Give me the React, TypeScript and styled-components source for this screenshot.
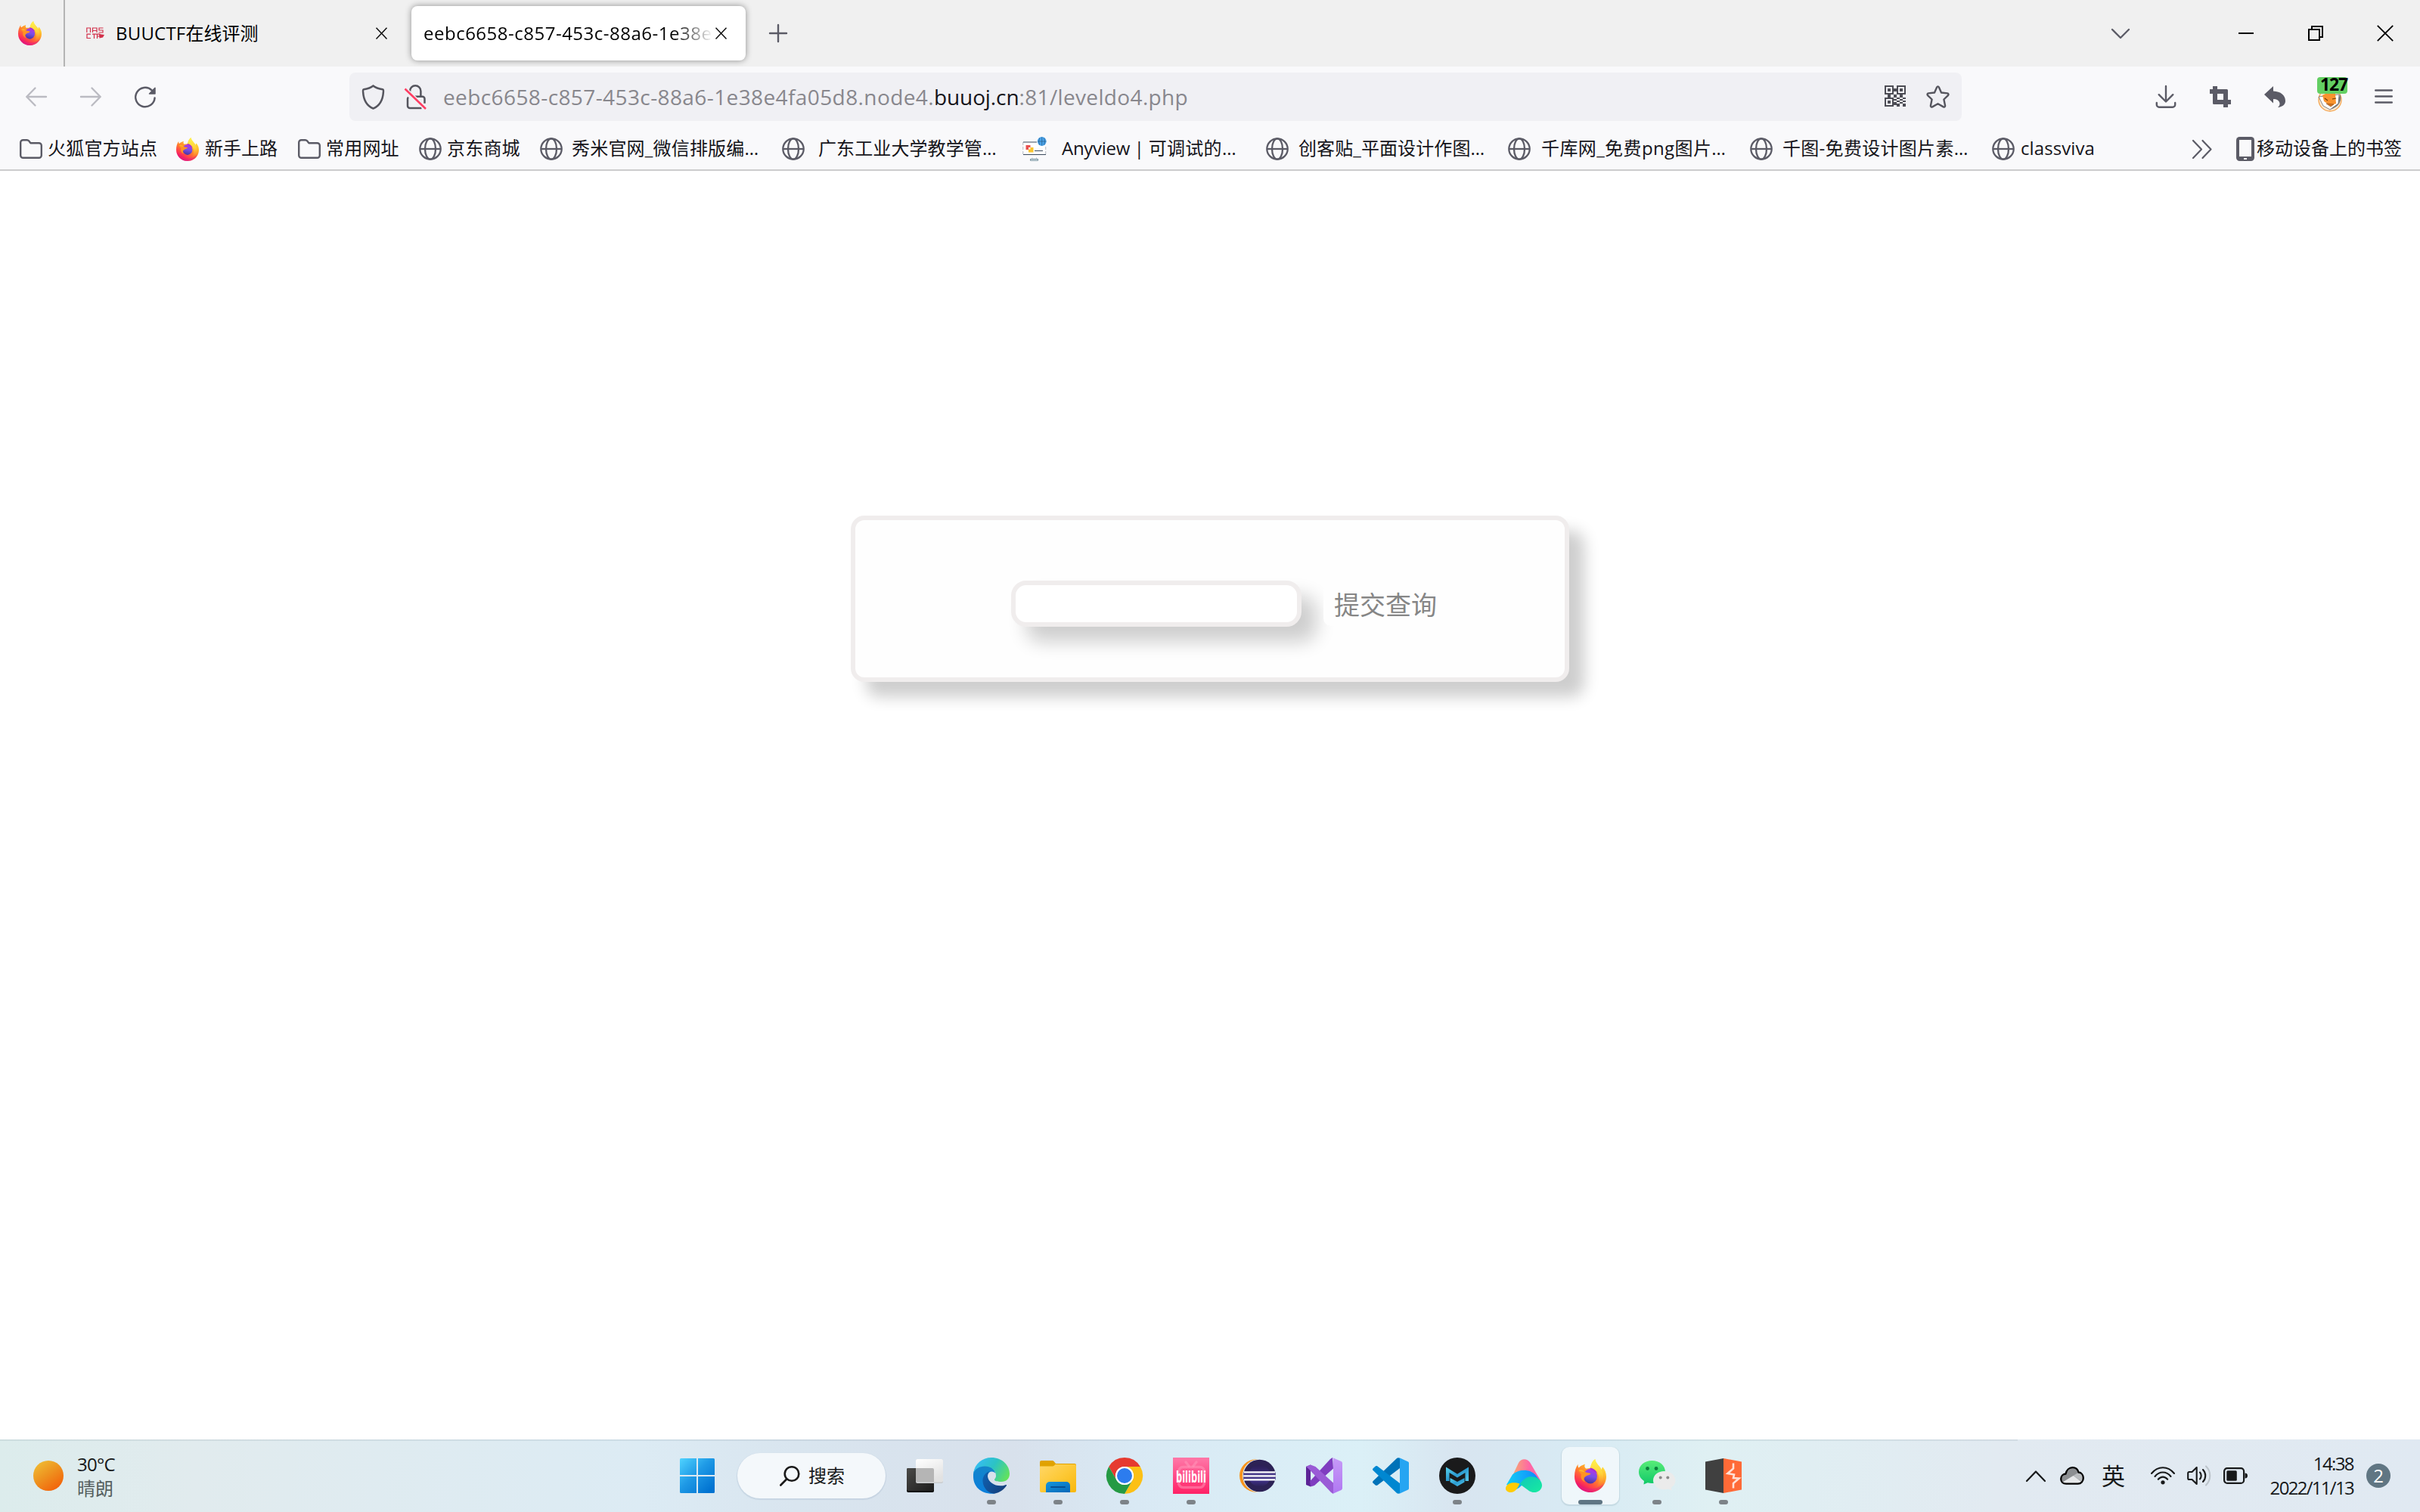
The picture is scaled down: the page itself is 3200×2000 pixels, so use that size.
import React from "react";
import styled, { createGlobalStyle } from "styled-components";

const Global = createGlobalStyle`
  * { box-sizing: border-box; }
  html, body { margin: 0; padding: 0; }
  body { font-family: "Open Sans", "Noto Sans CJK SC", sans-serif; font-size: 24px; color: #15141a; background: #fff; overflow: hidden; }
  svg { display: block; flex: none; overflow: visible; }
`;

const Screen = styled.div`
  display: flex;
  flex-direction: column;
  width: 3200px;
  height: 2000px;
  overflow: hidden;
  background: #fff;
`;

const Text = styled.span<{ $track?: number }>`
  white-space: nowrap;
  letter-spacing: ${(p) => p.$track ?? 0}px;
`;

/* ---------- tab strip ---------- */

const TabStrip = styled.header`
  display: flex;
  align-items: center;
  height: 88px;
  flex: none;
  background: #f0f0f0;
  color: #000;
`;

const PinnedTab = styled.div`
  display: flex;
  align-items: center;
  width: 86px;
  height: 100%;
  padding-left: 24px;
  border-right: 2px solid #b4b4b4;
`;

const Tab = styled.div<{ $active?: boolean }>`
  display: flex;
  align-items: center;
  height: 72px;
  width: ${(p) => (p.$active ? 442 : 458)}px;
  padding: ${(p) => (p.$active ? "0 25px 0 16px" : "0 32px 0 28px")};
  border-radius: 8px;
  background: ${(p) => (p.$active ? "#fff" : "transparent")};
  box-shadow: ${(p) => (p.$active ? "0 0 8px rgba(0, 0, 0, 0.42)" : "none")};
  line-height: 36px;
`;

const TabTitle = styled.div<{ $faded?: boolean }>`
  flex: 1;
  white-space: nowrap;
  margin-right: 3px;
  ${(p) => p.$faded && "mask-image: linear-gradient(to left, transparent, #000 52px);"}
`;

const Favicon = styled.div`
  width: 39px;
`;

const NewTab = styled.div`
  margin-left: 31px;
`;

const WindowControls = styled.div`
  display: flex;
  align-items: center;
  margin-left: auto;
  padding-right: 35px;
`;

const ControlSlot = styled.div<{ $gap: number }>`
  margin-left: ${(p) => p.$gap}px;
`;

/* ---------- navigation toolbar ---------- */

const NavBar = styled.nav`
  display: flex;
  align-items: center;
  height: 80px;
  flex: none;
  background: #f9f9fb;
  padding: 0 36px 0 34px;
`;

const NavButtons = styled.div`
  display: flex;
  align-items: center;
  gap: 44px;
  width: 428px;
`;

const UrlBar = styled.div`
  display: flex;
  align-items: center;
  width: 2132px;
  height: 64px;
  border-radius: 8px;
  background: #f0f0f4;
  padding: 0 16px 0 17px;
`;

const UrlText = styled.div`
  display: flex;
  flex: 1;
  margin-left: 22px;
  font-size: 28px;
  line-height: 40px;
  color: #88878d;
`;

const Host = styled(Text)`
  color: #15141a;
`;

const UrlIcons = styled.div`
  display: flex;
  gap: 27px;
`;

const LockSlot = styled.div`
  margin-left: 27px;
`;

const ToolbarIcons = styled.div`
  display: flex;
  align-items: center;
  gap: 44px;
  margin-left: 257px;
`;

const Extension = styled.div`
  position: relative;
  width: 40px;
  height: 44px;
  margin: 0 -8px 0 -2px;
  padding: 10px 0 0 1px;
`;

const ExtensionBadge = styled.span`
  position: absolute;
  top: -4px;
  left: 0;
  width: 40px;
  height: 22px;
  padding-left: 4px;
  border-radius: 4px;
  background: #63cf63;
  color: #000;
  font: 700 23px/19px "Open Sans", sans-serif;
  letter-spacing: -1.2px;
`;

/* ---------- bookmarks ---------- */

const BookmarkBar = styled.div`
  display: flex;
  align-items: center;
  height: 58px;
  flex: none;
  padding: 2px 24px 0 26px;
  border-bottom: 2px solid #cccccd;
  background: #f9f9fb;
`;

const Bookmark = styled.div<{ $width: number; $gap: number }>`
  display: flex;
  align-items: center;
  width: ${(p) => p.$width}px;
  gap: ${(p) => p.$gap}px;
  line-height: 36px;
`;

const BookmarkLabel = styled(Text)`
  padding-bottom: 2px;
`;

const BookmarkOverflow = styled.div`
  margin: 0 32px 0 auto;
`;

const MobileBookmarks = styled.div`
  display: flex;
  align-items: center;
  gap: 3px;
  line-height: 36px;
`;

/* ---------- page ---------- */

const Page = styled.main`
  display: flex;
  justify-content: center;
  align-items: flex-start;
  flex: 1;
  padding-top: 456px;
`;

const Card = styled.form`
  display: flex;
  align-items: flex-start;
  width: 950px;
  height: 220px;
  padding: 80px 0 0 206px;
  border: 6px solid #f0eded;
  border-radius: 18px;
  background: #fefefe;
  box-shadow: 20px 20px 20px #cecece;
`;

const QueryInput = styled.input`
  width: 384px;
  height: 61px;
  border: 6px solid #f0eded;
  border-radius: 20px;
  background: #fff;
  box-shadow: 20px 20px 24px #cecece;
  outline: none;
`;

const SubmitButton = styled.button`
  margin: 4px 0 0 29px;
  padding: 0 12px 0 14px;
  height: 56px;
  border: 0;
  border-radius: 10px;
  background: #fefefe;
  color: #868686;
  font: 34px/56px "Open Sans", "Noto Sans CJK SC", sans-serif;
`;

/* ---------- taskbar ---------- */

const Taskbar = styled.footer`
  display: flex;
  align-items: center;
  height: 96px;
  flex: none;
  color: #17191a;
  background:
    linear-gradient(rgba(70, 95, 110, 0.1), rgba(70, 95, 110, 0.1)) 0 0 / 2668px 2px no-repeat,
    linear-gradient(90deg, #dcecec 0, #e1ebee 260px, #dcebf4 850px, #d9e5ef 1050px, #d8e1ec 1340px, #d9e9f4 1500px, #dbf0f7 1800px, #d8e5f0 1930px, #d8ebf4 2100px, #dff0f3 2260px, #e2eaf1 2640px, #e0e9f2 3200px);
`;

const Weather = styled.div`
  display: flex;
  align-items: center;
  gap: 18px;
  width: 878px;
  padding: 2px 0 0 44px;
`;

const Sun = styled.div`
  width: 40px;
  height: 40px;
  margin-bottom: 2px;
  border-radius: 50%;
  background: linear-gradient(145deg, #f0c035 5%, #ee9420 45%, #f2660c 85%);
`;

const TwoLines = styled.div<{ $end?: boolean }>`
  display: flex;
  flex-direction: column;
  align-items: ${(p) => (p.$end ? "flex-end" : "flex-start")};
  line-height: 32px;
`;

const Muted = styled.span`
  color: #55605f;
`;

const Apps = styled.div`
  display: flex;
  align-items: center;
  height: 96px;
`;

const AppSlot = styled.div<{ $active?: boolean }>`
  display: flex;
  flex-direction: column;
  align-items: center;
  width: 76px;
  height: 76px;
  margin: 0 6px;
  padding-top: 14px;
  border-radius: 10px;
  background: ${(p) => (p.$active ? "rgba(255, 255, 255, 0.6)" : "transparent")};
  box-shadow: ${(p) => (p.$active ? "0 1px 1px 1px rgba(80, 110, 130, 0.14)" : "none")};
`;

const IconBox = styled.div`
  display: flex;
  align-items: center;
  justify-content: center;
  width: 48px;
  height: 48px;
`;

const Running = styled.i<{ $active?: boolean }>`
  width: ${(p) => (p.$active ? 32 : 12)}px;
  height: 6px;
  margin-top: 8px;
  border-radius: 3px;
  background: ${(p) => (p.$active ? "#5f7684" : "#7d8388")};
`;

const SearchPill = styled.div`
  display: flex;
  align-items: center;
  gap: 11px;
  width: 196px;
  height: 60px;
  margin: 0 8px 0 9px;
  padding-left: 56px;
  border-radius: 30px;
  background: #f4f8fb;
  box-shadow: 0 1px 1px 1px rgba(80, 110, 150, 0.13);
  line-height: 36px;
`;

const Tray = styled.div`
  display: flex;
  align-items: center;
  margin-left: auto;
  padding: 0 39px 0 0;
`;

const TraySlot = styled.div<{ $gap: number }>`
  margin-left: ${(p) => p.$gap}px;
`;

const InputMode = styled.span`
  margin-left: 23px;
  width: 32px;
  font-size: 31px;
  line-height: 44px;
`;

const Clock = styled(TwoLines)`
  width: 140px;
  padding-bottom: 1px;
`;

const NoticeCount = styled.div`
  width: 32px;
  height: 32px;
  margin-left: 17px;
  border-radius: 50%;
  background: #607683;
  color: #fff;
  font-size: 24px;
  line-height: 31px;
  text-align: center;
`;

/* ---------- icons ---------- */

const INK = "#5b5b66";

const Firefox = ({ w, h, id }: { w: number; h: number; id: string }) => (
  <svg width={w} height={h} viewBox="0 0 126 130" preserveAspectRatio="none">
    <defs>
      <linearGradient id={id + "b"} x1="0.85" y1="0.1" x2="0.3" y2="1">
        <stop offset="0" stopColor="#fff14a" />
        <stop offset="0.3" stopColor="#ffb62a" />
        <stop offset="0.55" stopColor="#ff7a2e" />
        <stop offset="0.78" stopColor="#ff3a4f" />
        <stop offset="1" stopColor="#e2007d" />
      </linearGradient>
      <linearGradient id={id + "y"} x1="0.5" y1="0" x2="0.5" y2="1">
        <stop offset="0" stopColor="#fff34f" />
        <stop offset="0.5" stopColor="#ffd33a" />
        <stop offset="1" stopColor="#ff8a30" stopOpacity="0" />
      </linearGradient>
      <linearGradient id={id + "p"} x1="0.6" y1="0" x2="0.4" y2="1">
        <stop offset="0" stopColor="#b833e1" />
        <stop offset="0.5" stopColor="#7a4ee8" />
        <stop offset="1" stopColor="#46349b" />
      </linearGradient>
    </defs>
    <path fill={`url(#${id}b)`} d="M14 20C13 27 14 31 17 34C22 28 30 24 42 20C38 27 40 33 45 37C52 36 58 37 64 33C65 21 72 6 82 0C83 14 96 24 103 34L107 43C109 36 108 34 112 31C121 41 126 54 126 68C126 103 98 130 63 130C28 130 0 103 0 68C0 48 5 32 14 20Z" />
    <path fill={`url(#${id}y)`} d="M82 0C83 14 96 24 105 38C124 68 114 102 84 112C100 98 101 66 88 48C80 38 66 40 64 33C65 21 72 6 82 0Z" />
    <ellipse cx="63" cy="67" rx="27" ry="29" fill={`url(#${id}p)`} />
    <path fill="#e3267d" opacity=".5" d="M10 92C28 118 92 128 118 92C108 118 86 130 63 130C38 130 18 114 10 92Z" />
    <path fill="#ff9423" d="M16 46C24 36 36 40 42 50C50 55 58 52 64 57C62 63 50 63 45 67C36 72 34 82 44 90C30 88 22 72 27 60Z" />
    <path fill="#ffbd2e" d="M16 44C26 38 36 42 41 51C34 50 24 48 16 44Z" opacity=".8" />
    <path fill="#a52bd6" d="M62 35C72 34 82 42 90 54L80 50C76 44 68 42 62 40Z" />
  </svg>
);

const Close = () => (
  <svg width="15" height="16" viewBox="0 0 15 16" stroke="#111" strokeWidth="1.5">
    <path d="M.5.7l14 14.8M14.5.7L.5 15.5" />
  </svg>
);

const Folder = () => (
  <svg width="30" height="26" viewBox="0 0 30 26" fill="none" stroke={INK} strokeWidth="2.4" strokeLinejoin="round">
    <path d="M1.2 21.5V4.5a3.3 3.3 0 0 1 3.3-3.3h5.2c1 0 1.8.4 2.4 1.100l2.300 2.900h11.100a3.300 3.300 0 0 1 3.300 3.300v13a3.300 3.300 0 0 1-3.300 3.300h-21a3.300 3.300 0 0 1-3.300-3.300z" />
  </svg>
);

const Globe = () => (
  <svg width="30" height="30" viewBox="0 0 30 30" fill="none" stroke={INK} strokeWidth="2.3">
    <circle cx="15" cy="15" r="13.700" />
    <ellipse cx="15" cy="15" rx="7" ry="13.700" />
    <path d="M1.500 15h27" />
  </svg>
);

const Anyview = () => (
  <svg width="32" height="32" viewBox="0 0 32 32">
    <path fill="#fff" d="M1.500 7h28v16h-28z" />
    <path d="M.7 7v17M30.700 13v11" stroke="#c2c6cd" strokeWidth="1.200" strokeDasharray="4 2" />
    <path d="M1 7h18M1 23.500h30M16 18.500h11" stroke="#3b4a5c" strokeWidth="1.200" />
    <path fill="#e8504f" d="M4.500 11h6v6h-6z" />
    <path fill="#fbc52d" d="M8 14h6.500v6.500H8z" />
    <path fill="#fff" d="M8 14h2.500v2.500H8z" />
    <path d="M13 27v2M18.500 27v2" stroke="#d0d3d8" />
    <path fill="#fff" stroke="#6b8a98" d="M10.500 29.500h10v1.800h-10z" />
    <circle cx="25.700" cy="6" r="5.900" fill="#4aa3ea" />
    <path d="M25.700.3v11.400M20 6h11.400M22.800 1.500c-1.200 3-1.200 6 0 9M28.600 1.500c1.200 3 1.200 6 0 9" stroke="#2b5f88" strokeWidth=".7" fill="none" />
  </svg>
);

const Arrow = ({ flip }: { flip?: boolean }) => (
  <svg width="28" height="26" viewBox="0 0 28 26" fill="none" stroke="#bbbbc2" strokeWidth="2.400" strokeLinecap="round" strokeLinejoin="round">
    <path transform={flip ? "translate(28 0) scale(-1 1)" : undefined} d="M27 13H1.300M12.500 1.500L1.300 13l11.200 11.500" />
  </svg>
);

const Reload = () => (
  <svg width="28" height="29" viewBox="0 0 28 29" fill="none" stroke={INK} strokeWidth="2.500" strokeLinecap="round">
    <path d="M26.600 15.500A12.700 12.700 0 1 1 22.700 5.400" />
    <path d="M27 2.200v7.800h-7.500z" fill={INK} stroke={INK} strokeWidth="1.500" strokeLinejoin="round" />
  </svg>
);

const Shield = () => (
  <svg width="29" height="33" viewBox="0 0 29 33" fill="none" stroke="#55555e" strokeWidth="2.500" strokeLinejoin="round">
    <path d="M14.500 1.400C11 4.200 6 5.600 2 6.200c-1 .2-1.200 1.100-.9 3.600C1.700 19 5 27.500 14.500 31.500 24 27.500 27.300 19 27.900 9.800c.3-2.500.1-3.400-.9-3.600-4-.6-9-2-12.500-4.800z" />
  </svg>
);

const BrokenLock = () => (
  <svg width="29" height="33" viewBox="0 0 29 33" fill="none" stroke="#55555e" strokeWidth="2.500">
    <path d="M7 13V8.500a7.200 7.200 0 0 1 14.400 0V15" />
    <path d="M10.500 15.800H23.500a3 3 0 0 1 3 3v6M22.500 31H7a3 3 0 0 1-3-3V18.800a3 3 0 0 1 1-2.200" />
    <path d="M.5 5.500l27.500 26.500" stroke="#f0f0f4" strokeWidth="5.500" />
    <path d="M.5 5.500l27.500 26.500" stroke="#ff3d63" strokeWidth="2.600" />
  </svg>
);

const QR = [
  "11111100111111",
  "10000100100001",
  "10110111101101",
  "10110111101101",
  "10000100100001",
  "11111100111111",
  "00110011001100",
  "00110011001100",
  "11111100110011",
  "10000111001100",
  "10110100110011",
  "10110111001100",
  "10000111110011",
  "11111100110011",
];

const QrCode = () => (
  <svg width="28" height="28" viewBox="0 0 14 14" fill="#4d4d55" shapeRendering="crispEdges">
    {QR.flatMap((row, y) => [...row].map((c, x) => (c === "1" ? <rect key={`${x}-${y}`} x={x} y={y} width="1" height="1" /> : null)))}
  </svg>
);

const Star = () => (
  <svg width="31" height="30" viewBox="0 0 31 30" fill="none" stroke="#55555e" strokeWidth="2.400" strokeLinejoin="round">
    <path d="M14.200 2.300c.5-1.200 2.100-1.200 2.600 0l3.200 7.200 8 .9c1.400.2 2 1.700 1 2.700l-5.600 5.400 1.700 8.300c.2 1.300-1.100 2.300-2.300 1.600L15.500 24.300l-7.300 4.100c-1.200.7-2.500-.3-2.300-1.600l1.700-8.300L2 13.100c-1-1-.4-2.500 1-2.700l8-.9z" />
  </svg>
);

const Download = () => (
  <svg width="27" height="30" viewBox="0 0 27 30" fill="none" stroke={INK} strokeWidth="2.400" strokeLinecap="round" strokeLinejoin="round">
    <path d="M13 1v19.500M3.700 12.200l9.300 9.300 9.300-9.300M.8 23v2.500a3.200 3.200 0 0 0 3.200 3.200h18a3.200 3.200 0 0 0 3.200-3.200V23" />
  </svg>
);

const Crop = () => (
  <svg width="28" height="28" viewBox="0 0 28 28" fill={INK}>
    <path fillRule="evenodd" d="M4 0h6v4h12.500a1.500 1.500 0 0 1 1.500 1.500V18h4v6h-4v4h-6v-4H5.500A1.500 1.500 0 0 1 4 22.500V10H0V4h4zM10 10v8h8v-8z" />
  </svg>
);

const Undo = () => (
  <svg width="28" height="28" viewBox="0 0 28 28" fill={INK}>
    <path d="M0 11L12 0v6.500C22 7 28 12 28 19.500c0 4-2.500 7-8.500 8.500H18c4.500-3 3.500-11-6-11v5.500z" />
  </svg>
);

const Fox = () => (
  <svg width="32" height="32" viewBox="0 0 32 32">
    <circle cx="16" cy="16" r="15" fill="#fbe7d0" stroke="#f5a34c" strokeWidth="1.300" />
    <path d="M29 8c4 8-1 18-13 21 6-6 12-12 13-21z" fill="#77797d" />
    <path d="M1 12l6 12 9 5 11-8 1-12z" fill="#fff" stroke="#666" strokeWidth=".8" />
    <path d="M6 10l4-2h13l1 13-6 2-4-1-6-4z" fill="#f8932e" />
    <path d="M11 21l10 1-4 3z" fill="#d9741c" stroke="#8d4b12" strokeWidth=".6" />
    <path d="M9 14l4 3M19 15l5-1" stroke="#6b3a10" strokeWidth="1.100" />
  </svg>
);

const Menu = () => (
  <svg width="24" height="20" viewBox="0 0 24 20" stroke={INK} strokeWidth="2.400" strokeLinecap="round">
    <path d="M1.200 1.500h21.600M1.200 9.500h21.600M1.200 17.500h21.600" />
  </svg>
);

const Plus = () => (
  <svg width="24" height="24" viewBox="0 0 24 24" stroke={INK} strokeWidth="2.400" strokeLinecap="round">
    <path d="M12 1v22M1 12h22" />
  </svg>
);

const ChevronDown = () => (
  <svg width="24" height="13" viewBox="0 0 24 13" fill="none" stroke={INK} strokeWidth="2.300" strokeLinecap="round" strokeLinejoin="round">
    <path d="M1 1l11 11L23 1" />
  </svg>
);

const Minimize = () => (
  <svg width="20" height="2" viewBox="0 0 20 2">
    <path fill="#000" d="M0 0h20v2H0z" />
  </svg>
);

const Restore = () => (
  <svg width="20" height="20" viewBox="0 0 20 20" fill="none" stroke="#000" strokeWidth="2">
    <path d="M1 5h14v14H1zM5 4.500V1h14v14h-3.500" />
  </svg>
);

const WinClose = () => (
  <svg width="22" height="22" viewBox="0 0 22 22" stroke="#000" strokeWidth="1.800">
    <path d="M.8.8l20.400 20.400M21.200.8L.8 21.200" />
  </svg>
);

const DasLogo = () => (
  <svg width="24" height="16" viewBox="0 0 24 16" fill="none" stroke="#d2304a" strokeWidth="1.200">
    <path d="M.8 7V1h4.700v6M8.500 7V1H14v6M8.500 4.500H14M22.500 1H17v3h5v3h-5.500" />
    <path d="M6 9.200H1v5.300h5M8 9.200h7M10.500 9.200v5.800M14.500 15V9.200h4M14.500 12h4" />
    <path fill="#d2304a" stroke="none" d="M17 9l7 1-2 3.500-4.500 1z" />
  </svg>
);

const DoubleChevron = () => (
  <svg width="26" height="25" viewBox="0 0 26 25" fill="none" stroke={INK} strokeWidth="2.200" strokeLinecap="round" strokeLinejoin="round">
    <path d="M1 1l11 11.500L1 24M13.500 1l11 11.500-11 11.500" />
  </svg>
);

const Phone = () => (
  <svg width="24" height="32" viewBox="0 0 24 32">
    <rect width="24" height="32" rx="4.500" fill={INK} />
    <path fill="#f9f9fb" d="M4 4h16v22H4zM10 28h4v2h-4z" />
  </svg>
);

const Windows = () => (
  <svg width="46" height="46" viewBox="0 0 46 46">
    <defs>
      <linearGradient id="win" gradientUnits="userSpaceOnUse" x1="0" y1="0" x2="40" y2="42">
        <stop offset="0" stopColor="#4fd3ff" />
        <stop offset="0.5" stopColor="#1f9ae6" />
        <stop offset="1" stopColor="#0173d1" />
      </linearGradient>
    </defs>
    <path fill="url(#win)" d="M1.500 0H22v22H0V1.500A1.500 1.500 0 0 1 1.500 0zM24 0h20.500A1.500 1.500 0 0 1 46 1.500V22H24zM0 24h22v22H1.500A1.500 1.500 0 0 1 0 44.500zM24 24h22v20.500a1.500 1.500 0 0 1-1.500 1.500H24z" />
  </svg>
);

const Magnifier = () => (
  <svg width="27" height="27" viewBox="0 0 27 27" fill="none" stroke="#1a1a1a" strokeWidth="2.600" strokeLinecap="round">
    <circle cx="16" cy="10.500" r="9.300" />
    <path d="M9.200 17.500L1.300 25.500" />
  </svg>
);

const TaskView = () => (
  <svg width="48" height="48" viewBox="0 0 48 48">
    <defs>
      <linearGradient id="tvd" x1="0" y1="0" x2="1" y2="1">
        <stop offset="0" stopColor="#4b4a48" />
        <stop offset="1" stopColor="#1d1d1c" />
      </linearGradient>
      <linearGradient id="tvl" x1="0" y1="0" x2="0.500" y2="1">
        <stop offset="0" stopColor="#fff" />
        <stop offset="1" stopColor="#e2e2e2" />
      </linearGradient>
    </defs>
    <rect y="14" width="36" height="32" rx="2" fill="#070707" />
    <rect y="14" width="36" height="30" rx="2" fill="url(#tvd)" />
    <rect x="12" y="2" width="36" height="32" rx="2" fill="#c9ccce" />
    <rect x="12" y="2" width="36" height="30.500" rx="2" fill="url(#tvl)" />
    <path fill="#b5b5b5" d="M12 14h22a2 2 0 0 1 2 2v16.500H14a2 2 0 0 1-2-2z" />
  </svg>
);

const Edge = () => (
  <svg width="48" height="48" viewBox="0 0 48 48">
    <defs>
      <linearGradient id="eg" x1="0" y1="0.300" x2="1" y2="0.700">
        <stop offset="0" stopColor="#37bdf5" />
        <stop offset="0.500" stopColor="#2cc3c4" />
        <stop offset="1" stopColor="#63e35a" />
      </linearGradient>
      <linearGradient id="eb" x1="0.500" y1="0" x2="0.300" y2="1">
        <stop offset="0" stopColor="#1586c9" />
        <stop offset="1" stopColor="#0a7edc" />
      </linearGradient>
      <linearGradient id="ed" x1="0" y1="0" x2="1" y2="0.500">
        <stop offset="0" stopColor="#0f63b4" />
        <stop offset="1" stopColor="#15417f" />
      </linearGradient>
    </defs>
    <path fill="url(#eb)" d="M0 23C0 13 8 9 16 10.500c8 1 13 6 13 10-3-3-8-3-10 2-3 8 2 20 9 25.200C10 49 0 38 0 25z" />
    <path fill="url(#ed)" d="M22 18c-7 2-10 8-9.500 14C13.500 41 20 47.500 28 47.700 35 46.500 41 42 44 37c.4-1-.5-1.300-1.500-.8C32 40 20 34 19 25c0-3 1-5.500 3-7z" />
    <path fill="url(#eg)" d="M.3 20C2 8 12 0 24 0c14 0 24 10 24 21.500C48 28 43.500 32 37 32c-5 0-9-1-9-2.800 0-1.200 2-1.700 2-5.200C30 17 24 11.500 15 11.500 8 11.500 3 15 .3 20z" />
  </svg>
);

const Explorer = () => (
  <svg width="48" height="48" viewBox="0 0 48 48">
    <defs>
      <linearGradient id="exy" x1="0" y1="0" x2="1" y2="1">
        <stop offset="0" stopColor="#ffd768" />
        <stop offset="0.500" stopColor="#fdc937" />
        <stop offset="1" stopColor="#f8b70b" />
      </linearGradient>
      <linearGradient id="exb" x1="0" y1="0" x2="1" y2="1">
        <stop offset="0" stopColor="#1496dd" />
        <stop offset="1" stopColor="#0667b8" />
      </linearGradient>
    </defs>
    <path fill="#e0a200" d="M0 6a2 2 0 0 1 2-2h14c1.500 0 2.500.7 3.200 1.700L21 8h25a2 2 0 0 1 2 2v8H0z" />
    <path fill="url(#exy)" d="M0 11.500h16c1.500 0 2.500-.5 3.500-1.500l1-1H46a2 2 0 0 1 2 2v33a2 2 0 0 1-2 2H2a2 2 0 0 1-2-2z" />
    <path fill="url(#exb)" d="M8 46V37a5 5 0 0 1 5-5h22a5 5 0 0 1 5 5v9z" />
    <path stroke="#064f93" strokeWidth="2" strokeLinecap="round" d="M15 39h18" />
  </svg>
);

const Chrome = () => (
  <svg width="48" height="48" viewBox="0 0 48 48">
    <path fill="#e63a30" d="M24 12h20.800A24 24 0 0 0 3.200 12L13.600 30A12 12 0 0 1 24 12z" />
    <path fill="#fcc015" d="M44.800 12A24 24 0 0 1 24 48l10.400-18A12 12 0 0 0 24 12z" />
    <path fill="#259a44" d="M3.200 12A24 24 0 0 0 24 48l10.400-18a12 12 0 0 1-20.800 0z" />
    <circle cx="24" cy="24" r="12" fill="#fff" />
    <circle cx="24" cy="24" r="10" fill="#2c7cee" />
  </svg>
);

const BiliWord = styled.text`
  font: 700 22px "Open Sans", sans-serif;
  fill: #fff;
`;

const Bilibili = () => (
  <svg width="48" height="48" viewBox="0 0 48 48">
    <defs>
      <linearGradient id="bl" x1="0" y1="0" x2="0" y2="1">
        <stop offset="0" stopColor="#ff78a8" />
        <stop offset="1" stopColor="#ff2166" />
      </linearGradient>
    </defs>
    <path fill="url(#bl)" d="M0 0h48v48H0z" />
    <g fill="none" stroke="#ff9abb" strokeOpacity=".5" strokeWidth="3.500" strokeLinecap="round">
      <rect x="7.500" y="12.500" width="34" height="27" rx="6" />
      <path d="M17 6l4 5M31 6l-4 5" />
    </g>
    <BiliWord x="4" y="33" textLength="40" lengthAdjust="spacingAndGlyphs">bilibili</BiliWord>
  </svg>
);

const Eclipse = () => (
  <svg width="48" height="44" viewBox="0 0 48 44">
    <defs>
      <linearGradient id="ec" x1="0" y1="0" x2="0" y2="1">
        <stop offset="0" stopColor="#2b1f55" />
        <stop offset="0.700" stopColor="#40318a" />
        <stop offset="1" stopColor="#2c2255" />
      </linearGradient>
    </defs>
    <circle cx="21.700" cy="22" r="21.700" fill="#f7941e" />
    <circle cx="26" cy="22" r="22" fill="#dceaf4" />
    <circle cx="26.500" cy="22" r="21.300" fill="#2c2255" />
    <circle cx="26.500" cy="22" r="14.500" fill="url(#ec)" />
    <path fill="#4a3d8c" d="M5.500 18.500h42v9h-42z" />
    <path fill="#fff" d="M6 16.300h41v2.300H6zM5.300 21.300h42.500v2.300H5.300zM6 26.300h41v2.300H6z" />
  </svg>
);

const VisualStudio = () => (
  <svg width="48" height="48" viewBox="0 0 48 48">
    <defs>
      <linearGradient id="vsp" x1="0" y1="0" x2="0" y2="1">
        <stop offset="0" stopColor="#c79bf7" />
        <stop offset="1" stopColor="#b077f2" />
      </linearGradient>
    </defs>
    <path fill="#5c2396" d="M0 12l6-2.500V38.500L0 36z" />
    <path fill="#7f3dc0" d="M35 0l1 14.500L11 37l-5 1.500-1-7L32 2z" />
    <path fill="#9a5bd6" d="M0 12l6-2.500L12.500 12 36 33.500V48l-3-2L4 15.500z" />
    <path fill="url(#vsp)" d="M35 0l12 5.300L48 7v34l-1 1.700L35 48c1-1 1-2 1-3V3c0-1 0-2-1-3z" />
  </svg>
);

const VSCode = () => (
  <svg width="48" height="48" viewBox="0 0 48 48">
    <path fill="#0072b8" d="M32 1c1-1 3-1 4 0v13L6.500 36.500c-1 .7-2 .6-2.800 0L.7 33.800c-.9-.8-.9-2 0-2.800z" />
    <path fill="#0087d1" d="M32 47c1 1 3 1 4 0V34L6.500 11.500c-1-.7-2-.6-2.800 0L.7 14.200c-.9.8-.9 2 0 2.800z" />
    <path fill="#26a5f2" d="M35 0l12 5.500c.7.400 1 1 1 1.700v33.600c0 .7-.3 1.300-1 1.700L35 48c.7-.7 1-1.500 1-2.500v-43c0-1-.3-1.800-1-2.500z" />
  </svg>
);

const MIcon = () => (
  <svg width="48" height="48" viewBox="0 0 48 48">
    <defs>
      <linearGradient id="mc" x1="0" y1="0" x2="1" y2="1">
        <stop offset="0" stopColor="#5ad4ee" />
        <stop offset="0.500" stopColor="#2b9bd0" />
        <stop offset="1" stopColor="#58c8ea" />
      </linearGradient>
    </defs>
    <circle cx="24" cy="24" r="24" fill="#1a1a1b" />
    <path fill="url(#mc)" d="M9 12.500l15 9.300 15-9.300V31h-4.500V20L24 26.500 13.500 20v11H9z" />
    <path fill="url(#mc)" d="M14.500 27L24 32l9.500-5v5.500L24 38l-9.500-5.500z" />
  </svg>
);

const AIcon = () => (
  <svg width="48" height="44" viewBox="0 0 48 44">
    <defs>
      <linearGradient id="ap" x1="0" y1="0" x2="1" y2="0">
        <stop offset="0.100" stopColor="#f7a07a" />
        <stop offset="0.600" stopColor="#ff67a5" />
      </linearGradient>
      <linearGradient id="ab" x1="0" y1="0.500" x2="1" y2="0.500">
        <stop offset="0" stopColor="#10d0f5" />
        <stop offset="1" stopColor="#1380ff" />
      </linearGradient>
      <linearGradient id="ag" x1="0" y1="0" x2="1" y2="1">
        <stop offset="0" stopColor="#10c8b8" />
        <stop offset="1" stopColor="#17ec9f" />
      </linearGradient>
    </defs>
    <path fill="url(#ap)" d="M9 22l8-17c3-6.500 12-6.500 15.500 0L46 28 28 24z" />
    <path fill="url(#ab)" d="M1 34l8-13.500c8-7.500 23-8 30.500.5L47 31c-3-5-11-9-18-4-5 4-8 10-15 13z" />
    <path fill="url(#ag)" d="M18.500 33c4-5 8-9.500 14-9.800C42 22.500 48 29 48 34.500 48 43 37.500 47.500 29.500 41z" />
    <path fill="#ffcc05" d="M0 38c1.500-6 9-8.500 18.500-5.500C16 38 13 44 6.500 44 2.500 44-.5 41.500 0 38z" />
  </svg>
);

const WeChat = () => (
  <svg width="48" height="40" viewBox="0 0 48 40">
    <defs>
      <linearGradient id="wc" x1="0" y1="0" x2="0" y2="1">
        <stop offset="0" stopColor="#58ec78" />
        <stop offset="1" stopColor="#10c968" />
      </linearGradient>
    </defs>
    <path fill="url(#wc)" d="M17.500 0C27.500 0 35 6.500 35 15s-7.500 15-17.500 15c-2 0-4-.3-5.800-.8L6.500 31.500 7 27C2.500 24 0 20 0 15 0 6.500 7.500 0 17.500 0z" />
    <path fill="#ebebeb" d="M33.500 14C42 14 48.500 19.500 48.500 26.200c0 4-2 7-5.500 9.300l.7 4-4.500-2c-1.700.5-3.700.8-5.700.8C25.500 38.300 19 33 19 26.200S25.500 14 33.500 14z" />
    <circle cx="11.500" cy="10.500" r="2.400" fill="#0b7f3c" />
    <circle cx="23" cy="10.500" r="2.400" fill="#0b7f3c" />
    <circle cx="28.700" cy="22.500" r="2" fill="#8a8a8a" />
    <circle cx="38.300" cy="22.500" r="2" fill="#8a8a8a" />
  </svg>
);

const Burp = () => (
  <svg width="48" height="46" viewBox="0 0 48 46">
    <path fill="#404040" d="M0 4.500L24 0v46L0 41.500z" />
    <path fill="#ff6a37" d="M24 0l24 4.500v37L24 46z" />
    <path fill="none" stroke="#ffe1d6" strokeWidth="2.600" d="M37 6.500v7L29.500 20l8.500 1.500L37 26l7.500.5L37 33v6.500" />
  </svg>
);

const ChevronUp = () => (
  <svg width="26" height="15" viewBox="0 0 26 15" fill="none" stroke="#17191a" strokeWidth="2.200" strokeLinecap="round" strokeLinejoin="round">
    <path d="M1 14L13 1.500 25 14" />
  </svg>
);

const Cloud = () => (
  <svg width="32" height="24" viewBox="0 0 32 24">
    <path fill="#8c8f92" d="M8 22.700C4 22.700 1.200 20 1.200 16.200 1.200 12.500 4 9.800 7.500 9.500 8.500 4.500 12 1.200 16.500 1.200c4 0 7 2.600 8 6.300 3.700.3 6.300 3.500 6.300 7.500 0 4.500-3 7.700-7 7.700z" />
    <path fill="#b9bcbf" d="M17.500 12l7-4.500c3.700.3 6.300 3.500 6.300 7.500 0 2-.5 3.500-1.500 5z" />
    <path fill="#e6e8ea" d="M3.500 20.500L17.500 12l11.500 8.500c-1.500 1.500-3 2.200-5.200 2.200H8c-2 0-3.500-.8-4.500-2.200z" />
    <path fill="none" stroke="#000" strokeWidth="2.300" d="M8 22.700C4 22.700 1.200 20 1.200 16.200 1.200 12.500 4 9.800 7.500 9.500 8.500 4.500 12 1.200 16.500 1.200c4 0 7 2.600 8 6.300 3.700.3 6.300 3.500 6.300 7.500 0 4.500-3 7.700-7 7.700z" />
  </svg>
);

const Wifi = () => (
  <svg width="32" height="24" viewBox="0 0 32 24" fill="none" stroke="#17191a" strokeWidth="2.100" strokeLinecap="round">
    <path d="M1 9C9.500-1.300 22.500-1.300 31 9M5.500 13c6-7.300 15-7.300 21 0M9.800 16.800c3.700-4.300 8.700-4.300 12.400 0" />
    <circle cx="16" cy="20.800" r="2.600" fill="#17191a" stroke="none" />
  </svg>
);

const Speaker = () => (
  <svg width="32" height="28" viewBox="0 0 32 28" fill="none" stroke="#17191a" strokeWidth="2.100" strokeLinecap="round" strokeLinejoin="round">
    <path d="M1.200 10.500a1.500 1.500 0 0 1 1.500-1.500H6.500L12.700 3v22L6.500 19H2.700a1.500 1.500 0 0 1-1.500-1.500zM17 9.500c2.200 2.500 2.200 6.500 0 9M21 6c4.300 4.500 4.300 11.500 0 16" />
    <path stroke="#bcc4cb" d="M25 1.500c7 7 7 18 0 25" />
  </svg>
);

const Battery = () => (
  <svg width="32" height="22" viewBox="0 0 32 22">
    <rect x="1.100" y="1.100" width="26" height="19.800" rx="4" fill="none" stroke="#17191a" strokeWidth="2.200" />
    <rect x="4.300" y="4.300" width="13.500" height="13.400" rx="1.500" fill="#17191a" />
    <path fill="#17191a" d="M28.500 7.500c2 0 3.500 1 3.500 3.500s-1.500 3.500-3.500 3.500z" />
  </svg>
);

/* ---------- data ---------- */

const bookmarks: { label: React.ReactNode; icon: React.ReactNode; width: number; gap: number; track?: number }[] = [
  { label: "火狐官方站点", icon: <Folder />, width: 207, gap: 7, track: 0.2 },
  { label: "新手上路", icon: <Firefox w={30} h={31} id="fxb" />, width: 161, gap: 8 },
  { label: "常用网址", icon: <Folder />, width: 160, gap: 7, track: 0.2 },
  { label: "京东商城", icon: <Globe />, width: 160, gap: 7, track: 0.2 },
  { label: "秀米官网_微信排版编…", icon: <Globe />, width: 320, gap: 12, track: 0.2 },
  { label: "广东工业大学教学管…", icon: <Globe />, width: 318, gap: 18, track: 0.1 },
  { label: <><Text $track={-0.3}>Anyview | </Text>可调试的…</>, icon: <Anyview />, width: 322, gap: 20, track: 0.3 },
  { label: "创客贴_平面设计作图…", icon: <Globe />, width: 320, gap: 13, track: 0.1 },
  { label: "千库网_免费png图片…", icon: <Globe />, width: 320, gap: 14, track: 0.4 },
  { label: "千图-免费设计图片素…", icon: <Globe />, width: 320, gap: 13, track: 0.3 },
  { label: "classviva", icon: <Globe />, width: 140, gap: 8, track: 0.1 },
];

const apps: { icon: React.ReactNode; running?: boolean; active?: boolean }[] = [
  { icon: <TaskView /> },
  { icon: <Edge />, running: true },
  { icon: <Explorer />, running: true },
  { icon: <Chrome />, running: true },
  { icon: <Bilibili />, running: true },
  { icon: <Eclipse /> },
  { icon: <VisualStudio /> },
  { icon: <VSCode /> },
  { icon: <MIcon />, running: true },
  { icon: <AIcon /> },
  { icon: <Firefox w={42} h={44} id="fxt" />, running: true, active: true },
  { icon: <WeChat />, running: true },
  { icon: <Burp />, running: true },
];

export default function App() {
  return (
    <Screen>
      <Global />
      <TabStrip>
        <PinnedTab>
          <Firefox w={31} h={32} id="fxp" />
        </PinnedTab>
        <Tab>
          <Favicon>
            <DasLogo />
          </Favicon>
          <TabTitle>
            <Text $track={0.2}>BUUCTF</Text>在线评测
          </TabTitle>
          <Close />
        </Tab>
        <Tab $active>
          <TabTitle $faded>
            <Text $track={0.5}>eebc6658-c857-453c-88a6-1e38e</Text>
          </TabTitle>
          <Close />
        </Tab>
        <NewTab>
          <Plus />
        </NewTab>
        <WindowControls>
          <ChevronDown />
          <ControlSlot $gap={144}><Minimize /></ControlSlot>
          <ControlSlot $gap={72}><Restore /></ControlSlot>
          <ControlSlot $gap={71}><WinClose /></ControlSlot>
        </WindowControls>
      </TabStrip>

      <NavBar>
        <NavButtons>
          <Arrow />
          <Arrow flip />
          <Reload />
        </NavButtons>
        <UrlBar>
          <Shield />
          <LockSlot>
            <BrokenLock />
          </LockSlot>
          <UrlText>
            <Text $track={0.4}>eebc6658-c857-453c-88a6-1e38e4fa05d8.node4.</Text>
            <Host $track={-0.1}>buuoj.cn</Host>
            <Text $track={0.35}>:81/leveldo4.php</Text>
          </UrlText>
          <UrlIcons>
            <QrCode />
            <Star />
          </UrlIcons>
        </UrlBar>
        <ToolbarIcons>
          <Download />
          <Crop />
          <Undo />
          <Extension>
            <Fox />
            <ExtensionBadge>127</ExtensionBadge>
          </Extension>
          <Menu />
        </ToolbarIcons>
      </NavBar>

      <BookmarkBar>
        {bookmarks.map((b, i) => (
          <Bookmark key={i} $width={b.width} $gap={b.gap}>
            {b.icon}
            <BookmarkLabel $track={b.track}>{b.label}</BookmarkLabel>
          </Bookmark>
        ))}
        <BookmarkOverflow>
          <DoubleChevron />
        </BookmarkOverflow>
        <MobileBookmarks>
          <Phone />
          <BookmarkLabel>移动设备上的书签</BookmarkLabel>
        </MobileBookmarks>
      </BookmarkBar>

      <Page>
        <Card onSubmit={(e) => e.preventDefault()}>
          <QueryInput />
          <SubmitButton>提交查询</SubmitButton>
        </Card>
      </Page>

      <Taskbar>
        <Weather>
          <Sun />
          <TwoLines>
            <Text $track={-0.7}>30°C</Text>
            <Muted>晴朗</Muted>
          </TwoLines>
        </Weather>
        <Apps>
          <AppSlot>
            <IconBox>
              <Windows />
            </IconBox>
          </AppSlot>
          <SearchPill>
            <Magnifier />
            搜索
          </SearchPill>
          {apps.map((a, i) => (
            <AppSlot key={i} $active={a.active}>
              <IconBox>{a.icon}</IconBox>
              {a.running && <Running $active={a.active} />}
            </AppSlot>
          ))}
        </Apps>
        <Tray>
          <ChevronUp />
          <TraySlot $gap={19}><Cloud /></TraySlot>
          <InputMode>英</InputMode>
          <TraySlot $gap={33}><Wifi /></TraySlot>
          <TraySlot $gap={16}><Speaker /></TraySlot>
          <TraySlot $gap={16}><Battery /></TraySlot>
          <Clock $end>
            <Text $track={-1.6}>14:38</Text>
            <Text $track={-1.7}>2022/11/13</Text>
          </Clock>
          <NoticeCount>2</NoticeCount>
        </Tray>
      </Taskbar>
    </Screen>
  );
}
